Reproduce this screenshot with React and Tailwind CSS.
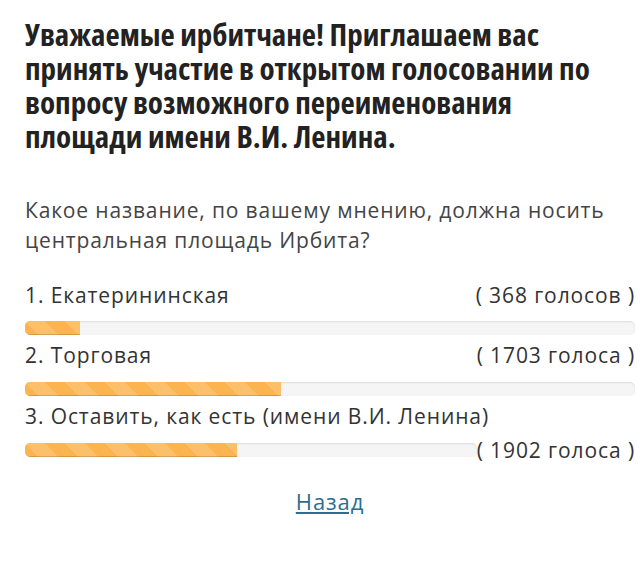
import React from "react";

const stripes =
  "bg-[linear-gradient(45deg,rgba(255,255,255,0.15)_25%,transparent_25%,transparent_50%,rgba(255,255,255,0.15)_50%,rgba(255,255,255,0.15)_75%,transparent_75%,transparent)] bg-[length:40px_40px]";

function Bar({ pct, className = "" }) {
  return (
    <div
      className={`h-[14px] rounded-[5px] bg-[#f5f5f5] shadow-[inset_0_1px_2px_rgba(0,0,0,0.1)] overflow-hidden ${className}`}
    >
      <div
        className={`h-full bg-[#fbb450] ${stripes} shadow-[inset_0_-1px_0_rgba(0,0,0,0.15)]`}
        style={{ width: `${pct}%` }}
      />
    </div>
  );
}

export default function App() {
  return (
    <div className="w-[640px] h-[578px] bg-white pl-[25px] pr-[5px] pt-[17px] font-['Open_Sans',sans-serif]">
      <h1 className="w-[595px] text-[31px] leading-[34px] font-bold text-[#222] [font-stretch:76%]">
        Уважаемые ирбитчане! Приглашаем вас принять участие в открытом голосовании по вопросу возможного переименования площади имени В.И. Ленина.
      </h1>
      <p className="mt-[42px] text-[21px] leading-[30px] tracking-[0.85px] text-[#444]">
        Какое название, по вашему мнению, должна носить центральная площадь Ирбита?
      </p>
      <div className="mt-[25px] text-[21px] leading-[30px] tracking-[0.9px] text-[#333]">
        <div className="flex justify-between">
          <span>1. Екатерининская</span>
          <span>( 368 голосов )</span>
        </div>
        <Bar pct={9} className="mt-[11px]" />
        <div className="flex justify-between mt-[5px]">
          <span>2. Торговая</span>
          <span>( 1703 голоса )</span>
        </div>
        <Bar pct={42} className="mt-[12px]" />
        <div className="mt-[5px]">3. Оставить, как есть (имени В.И. Ленина)</div>
        <div className="flex items-center mt-[4px]">
          <Bar pct={47} className="flex-1" />
          <span>( 1902 голоса )</span>
        </div>
      </div>
      <div className="mt-[20px] text-center">
        <a href="#" className="text-[22px] tracking-[0.9px] text-[#2c6e8f] underline">
          Назад
        </a>
      </div>
    </div>
  );
}
